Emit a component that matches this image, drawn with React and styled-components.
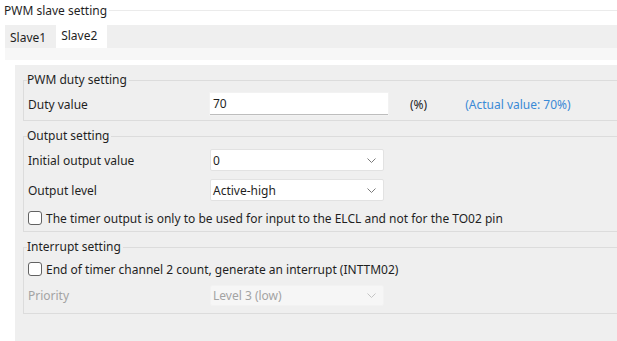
import React from "react";
import styled, { createGlobalStyle } from "styled-components";

const Global = createGlobalStyle`
  html, body, #root {
    margin: 0;
    height: 100%;
  }
  body {
    background: #ffffff;
    font-family: "Noto Sans", "Open Sans", sans-serif;
    font-size: 12px;
    color: #1f1f1f;
    overflow: hidden;
  }
`;

const Page = styled.div`
  display: flex;
  flex-direction: column;
  height: 100%;
`;

const Header = styled.div`
  display: flex;
  align-items: center;
  height: 22px;
  padding-left: 4px;
  margin-bottom: 3px;
`;

const Title = styled.span`
  line-height: 16px;
  padding-right: 2px;
`;

const TitleLine = styled.div`
  flex: 1;
  border-top: 1px solid #ebebeb;
  margin-top: -1px;
`;

const TabStrip = styled.div`
  display: flex;
  height: 23px;
  margin-left: 5px;
  background: #efefef;
`;

const Tab = styled.div`
  display: flex;
  align-items: center;
  padding: 0 10px 0 5px;
  background: ${(p) => (p.$active ? "#ffffff" : "transparent")};
  line-height: 16px;
  padding-top: ${(p) => (p.$active ? "0" : "2px")};
  padding-bottom: ${(p) => (p.$active ? "2px" : "0")};
`;

const TabBody = styled.div`
  flex: 1;
  display: flex;
  flex-direction: column;
  margin-left: 5px;
  padding-top: 12px;
  background: #f7f7f7;
`;

const Pane = styled.div`
  flex: 1;
  display: flex;
  flex-direction: column;
  padding: 5px 0 0 10px;
  background: #ffffff;
`;

const Panel = styled.div`
  flex: 1;
  display: flex;
  flex-direction: column;
  gap: 7px;
  margin-right: -20px;
  padding: 7px 0 0 8px;
  background: #efefef;
`;

const Group = styled.fieldset`
  margin: 0;
  padding: 5px 0 ${(p) => p.$bottom || 5}px 4px;
  border: 1px solid #dcdcdc;
  display: flex;
  flex-direction: column;
  gap: ${(p) => p.$gap || 8}px;
  min-width: 0;
`;

const Legend = styled.legend`
  padding: 0 2px 0 0;
  margin-left: -1px;
  line-height: 16px;
`;

const Row = styled.div`
  display: flex;
  align-items: center;
  height: ${(p) => p.$h || 22}px;
`;

const Label = styled.span`
  width: 182px;
  color: ${(p) => (p.$disabled ? "#a3a3a3" : "inherit")};
`;

const TextBox = styled.div`
  box-sizing: border-box;
  width: 178px;
  height: 22px;
  display: flex;
  align-items: center;
  padding-left: 3px;
  background: #ffffff;
  border-bottom: 1px solid #bdbdbd;
  box-shadow: 0 0 0 1px #f2f2f2;
`;

const Unit = styled.span`
  margin-left: 22px;
`;

const Actual = styled.span`
  margin-left: 38px;
  color: #3a8ad6;
`;

const Select = styled.div`
  box-sizing: border-box;
  width: 174px;
  height: ${(p) => (p.$disabled ? 21 : 22)}px;
  display: flex;
  align-items: center;
  justify-content: space-between;
  padding: 0 7px 0 2px;
  background: ${(p) => (p.$disabled ? "#f6f6f6" : "#ffffff")};
  border: 1px solid ${(p) => (p.$disabled ? "#f2f2f2" : "#e2e2e2")};
  border-radius: 2px;
  color: ${(p) => (p.$disabled ? "#a3a3a3" : "inherit")};
`;

const Check = styled.span`
  box-sizing: border-box;
  width: 14px;
  height: 14px;
  margin-right: 4px;
  border: 1px solid #626262;
  border-radius: 3px;
  background: #ffffff;
`;

const Chevron = ({ color = "#7a7a7a" }) => (
  <svg width="9" height="5" viewBox="0 0 9 5">
    <path d="M0.5 0.5 L4.5 4.5 L8.5 0.5" fill="none" stroke={color} strokeWidth="1" />
  </svg>
);

export default function App() {
  return (
    <Page>
      <Global />
      <Header>
        <Title>PWM slave setting</Title>
        <TitleLine />
      </Header>
      <TabStrip>
        <Tab>Slave1</Tab>
        <Tab $active>Slave2</Tab>
      </TabStrip>
      <TabBody>
        <Pane>
          <Panel>
            <Group $bottom={5}>
              <Legend>PWM duty setting</Legend>
              <Row>
                <Label>Duty value</Label>
                <TextBox>70</TextBox>
                <Unit>(%)</Unit>
                <Actual>(Actual value: 70%)</Actual>
              </Row>
            </Group>
            <Group $bottom={4}>
              <Legend>Output setting</Legend>
              <Row>
                <Label>Initial output value</Label>
                <Select>
                  0
                  <Chevron />
                </Select>
              </Row>
              <Row>
                <Label>Output level</Label>
                <Select>
                  Active-high
                  <Chevron />
                </Select>
              </Row>
              <Row $h={18}>
                <Check />
                The timer output is only to be used for input to the ELCL and not for the TO02 pin
              </Row>
            </Group>
            <Group $bottom={7} $gap={6}>
              <Legend>Interrupt setting</Legend>
              <Row $h={18}>
                <Check />
                End of timer channel 2 count, generate an interrupt (INTTM02)
              </Row>
              <Row>
                <Label $disabled>Priority</Label>
                <Select $disabled>
                  Level 3 (low)
                  <Chevron color="#c4c4c4" />
                </Select>
              </Row>
            </Group>
          </Panel>
        </Pane>
      </TabBody>
    </Page>
  );
}
